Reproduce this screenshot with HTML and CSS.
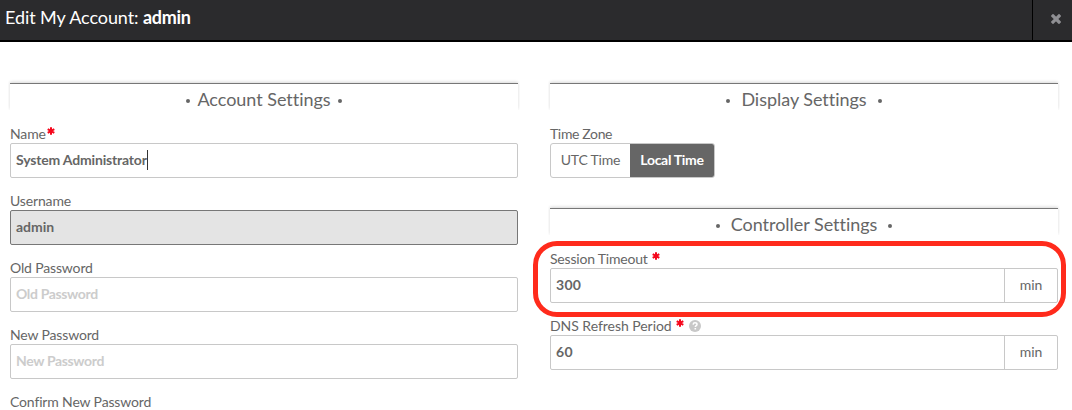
FILE: index.html
```html
<!DOCTYPE html>
<html lang="en">
<head>
<meta charset="utf-8">
<title>Edit My Account</title>
<link rel="stylesheet" href="styles.css">
</head>
<body>
<header class="titlebar">
  <h1 class="title">Edit My Account: <b class="account">admin</b></h1>
  <button class="close" aria-label="Close">
    <svg width="10" height="10" viewBox="0 0 10 10"><path d="M2 2 8 8M8 2 2 8" stroke="#8f8f93" stroke-width="3.2" stroke-linecap="square"/></svg>
  </button>
</header>
<main class="columns">
  <section class="column">
    <h2 class="section"><i class="dot"></i><span>Account Settings</span><i class="dot"></i></h2>
    <div class="field">
      <div class="label"><span>Name</span><svg class="star tight" viewBox="0 0 8 8"><path d="M4 .3v7.400M.7 2.100l6.600 3.800M7.300 2.100.7 5.900"/></svg></div>
      <div class="input"><span class="full-name">System Administrator</span><i class="caret"></i></div>
    </div>
    <div class="field">
      <div class="label"><span>Username</span></div>
      <div class="input disabled"><span>admin</span></div>
    </div>
    <div class="field">
      <div class="label"><span>Old Password</span></div>
      <div class="input placeholder"><span>Old Password</span></div>
    </div>
    <div class="field">
      <div class="label"><span>New Password</span></div>
      <div class="input placeholder"><span>New Password</span></div>
    </div>
    <div class="field last">
      <div class="label"><span>Confirm New Password</span></div>
    </div>
  </section>
  <section class="column">
    <h2 class="section wide"><i class="dot"></i><span>Display Settings</span><i class="dot"></i></h2>
    <div class="field zone">
      <div class="label"><span class="zone-label">Time Zone</span></div>
      <div class="toggle"><span class="option utc">UTC Time</span><span class="option local">Local Time</span></div>
    </div>
    <h2 class="section wide"><i class="dot"></i><span>Controller Settings</span><i class="dot"></i></h2>
    <div class="field">
      <div class="label"><span class="session">Session Timeout</span><svg class="star" viewBox="0 0 8 8"><path d="M4 .3v7.400M.7 2.100l6.600 3.800M7.300 2.100.7 5.900"/></svg></div>
      <div class="input"><span class="value">300</span><span class="unit">min</span></div>
      <div class="highlight"></div>
    </div>
    <div class="field">
      <div class="label"><span class="dns">DNS Refresh Period</span><svg class="star" viewBox="0 0 8 8"><path d="M4 .3v7.400M.7 2.100l6.600 3.800M7.300 2.100.7 5.900"/></svg><svg class="help" viewBox="0 0 12 12"><circle cx="6" cy="6" r="6" fill="#c8c8c8"/><path d="M4.100 4.600C4.200 3.300 5 2.800 6 2.800c1.200 0 2 .6 2 1.600 0 1.300-1.700 1.300-1.700 2.700" fill="none" stroke="#fff" stroke-width="1.500"/><path d="M5.500 8h1.600v1.500H5.500z" fill="#fff"/></svg></div>
      <div class="input"><span class="value">60</span><span class="unit">min</span></div>
    </div>
  </section>
</main>
</body>
</html>
```
FILE: styles.css
```css
* { box-sizing: border-box; }
body { margin: 0; background: #fff; color: #666; font-family: Lato, sans-serif; font-size: 14px; font-variant-ligatures: none; }
.titlebar { display: flex; height: 42px; background: #2b2b2d; border-bottom: 2px solid #000; }
.title { flex: 1; margin: 0; padding: 7px 0 0 5px; font-size: 18px; line-height: 21px; font-weight: 400; letter-spacing: -.08px; color: #fff; white-space: pre; }
.account { font-weight: 700; letter-spacing: -.3px; }
.close { width: 40px; padding: 0 0 3px 7px; border: 0; border-left: 1px solid #000; background: none; display: flex; align-items: center; justify-content: center; }
.close svg { display: block; }
.columns { display: grid; grid-template-columns: 508px 508px; gap: 32px; padding: 41px 0 0 10px; }
.section { display: flex; justify-content: center; align-items: center; gap: 7px; height: 27px; margin: 0 0 15px; padding-top: 5px; border-top: 1px solid #777; box-shadow: 0 -1px 3px rgba(0,0,0,.16); clip-path: inset(-4px -2px 0 -2px); font-size: 18px; line-height: 22px; font-weight: 400; letter-spacing: -.03px; }
.section span { margin-top: -1px; }
.wide { gap: 11px; }
.dot { width: 4px; height: 4px; border-radius: 50%; background: #666; margin-top: 3px; }
.field { position: relative; height: 67px; }
.last { height: 18px; }
.label { display: flex; height: 18px; line-height: 18px; white-space: nowrap; letter-spacing: -.15px; }
.zone-label { letter-spacing: -.35px; }
.session { letter-spacing: -.2px; }
.dns { letter-spacing: -.04px; }
.star { width: 8px; height: 8px; margin: 2px 0 0 4px; fill: none; stroke: #f5071c; stroke-width: 2; }
.star.tight { margin-left: 1px; }
.help { width: 12px; height: 12px; margin: 3px 0 0 5px; }
.input { display: flex; align-items: center; height: 35px; padding: 0 0 2px 5px; border: 1px solid #c8c8c8; border-radius: 2px; font-weight: 700; white-space: nowrap; }
.full-name { letter-spacing: -.17px; }
.disabled { background: #e4e4e4; border-color: #777; }
.placeholder { color: #ccc; letter-spacing: -.35px; }
.caret { width: 1px; height: 20px; background: #333; }
.value { flex: 1; letter-spacing: .3px; }
.unit { width: 53px; height: 33px; margin-bottom: -2px; line-height: 31px; border-left: 1px solid #c8c8c8; text-align: center; font-weight: 400; }
.zone { height: 83px; }
.toggle { display: flex; width: 165px; height: 35px; border: 1px solid #c8c8c8; border-radius: 3px; overflow: hidden; line-height: 32px; text-align: center; letter-spacing: -.2px; }
.utc { width: 79px; }
.local { width: 84px; color: #fff; background: #666; font-weight: 700; letter-spacing: -.3px; }
.highlight { position: absolute; left: -17px; top: -9px; width: 533px; height: 76px; border: 5px solid #ff2b1c; border-radius: 24px; }
```
